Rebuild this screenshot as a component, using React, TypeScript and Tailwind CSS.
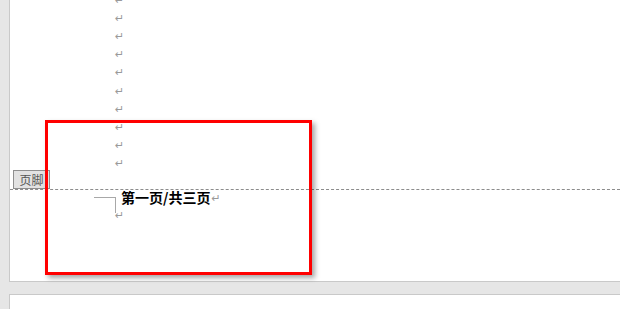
import React from 'react';

const cjk = { fontFamily: '"Noto Sans CJK SC", "Liberation Sans", sans-serif' };

function Mark({ className = '' }: { className?: string }) {
  return (
    <span className={`text-[11px] leading-none text-[#9a9a9a] font-['DejaVu_Sans',sans-serif] ${className}`}>↵</span>
  );
}

export default function App() {
  const lines = Array.from({ length: 11 });

  return (
    <div className="relative w-[620px] h-[309px] overflow-hidden bg-[#e6e6e6] pl-[9px]" style={cjk}>
      {/* page 1 */}
      <div className="h-[282px] bg-white border-l border-b border-[#c9c9c9] flex flex-col">
        {/* body paragraph marks */}
        <div className="h-[189px] shrink-0 overflow-hidden flex flex-col justify-end pb-[16px] pl-[105px]">
          {lines.map((_, i) => (
            <div key={i} className="h-[18.2px] shrink-0 flex items-center">
              <Mark />
            </div>
          ))}
        </div>

        {/* footer */}
        <div className="border-t border-dashed border-[#8c8c8c] flex pl-[84px] pt-[7px]">
          <div className="flex flex-col items-end">
            <div className="w-[22px] h-[16px] border-t border-r border-[#a8a8a8]" />
            <div className="w-[22px] pl-[21px] -mt-[3px] leading-none flex">
              <Mark />
            </div>
          </div>
          <div className="flex items-end -mt-[10px] ml-[5px] h-[20px]">
            <span className="text-[14px] font-bold leading-[20px] text-black">第一页/共三页</span>
            <Mark className="mb-[3px] ml-[1px]" />
          </div>
        </div>
      </div>

      {/* page 2 */}
      <div className="mt-[12px] h-[40px] bg-white border-l border-t border-[#c9c9c9]" />

      {/* footer label */}
      <div className="absolute left-[13px] top-[170px] w-[37px] h-[19px] bg-[#e2e2e2] border border-[#8f8f8f] flex items-center justify-center text-[12px] text-[#555] leading-none">
        页脚
      </div>

      {/* red annotation box */}
      <div className="absolute left-[45px] top-[120px] w-[267px] h-[155px] border-[3px] border-[#ff0000] shadow-[3px_3px_5px_rgba(0,0,0,0.35)]" />
    </div>
  );
}
